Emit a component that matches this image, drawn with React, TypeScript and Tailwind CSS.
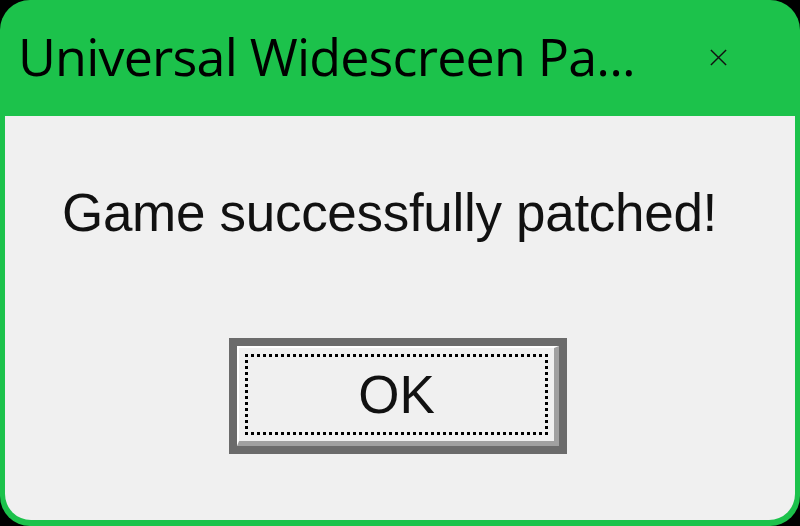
export default function App() {
  return (
    <div className="w-[800px] h-[526px] bg-black">
      <div className="w-full h-full rounded-[30px] bg-[#1cc24b] flex flex-col px-[5px] pb-[6px]">
        <div className="h-[116px] flex items-center justify-between pl-[13px] pr-[67px]">
          <span className="text-[52px] leading-none tracking-[-0.8px] text-black font-['Open_Sans',sans-serif] pb-[4px] whitespace-nowrap">
            Universal Widescreen Pa...
          </span>
          <svg width="19" height="19" viewBox="0 0 20 20" className="mt-[-2px]">
            <path d="M2 2 L18 18 M18 2 L2 18" stroke="#111" strokeWidth="1.5" />
          </svg>
        </div>
        <div className="flex-1 bg-[#f0f0f0] rounded-b-[26px] flex flex-col">
          <div className="pt-[70px] pl-[57px] text-[53px] leading-none tracking-[-0.3px] text-[#111] font-['Liberation_Sans',sans-serif] whitespace-nowrap">
            Game successfully patched!
          </div>
          <div className="mt-[99px] ml-[224px] w-[338px] h-[116px] border-[8px] border-[#6b6b6b]">
            <div className="w-full h-full border-t-[2px] border-l-[2px] border-white border-r-[5px] border-b-[5px] border-r-[#a0a0a0] border-b-[#a0a0a0] p-[6px]">
              <div className="w-full h-full border-[3px] border-dotted border-black flex items-center justify-center text-[53px] leading-none text-[#111] font-['Liberation_Sans',sans-serif]">
                OK
              </div>
            </div>
          </div>
        </div>
      </div>
    </div>
  )
}
